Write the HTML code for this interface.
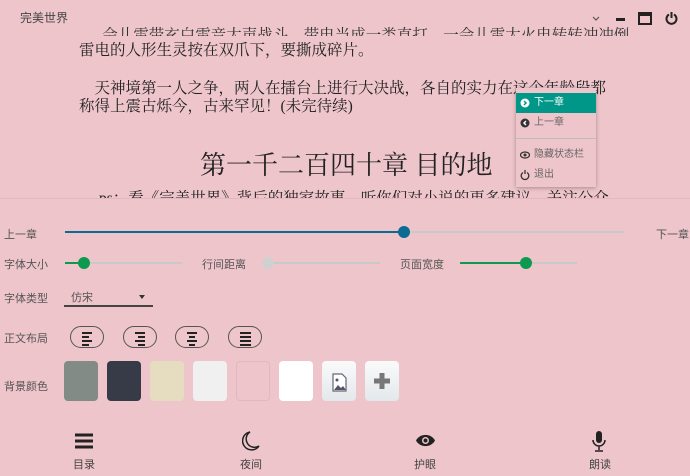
<!DOCTYPE html>
<html><head><meta charset="utf-8"><style>
*{margin:0;padding:0;box-sizing:border-box}
body{width:690px;height:476px;overflow:hidden;background:#eec5cb;position:relative;font-family:"Liberation Sans","Noto Sans CJK SC",sans-serif;color:#333}
.a{position:absolute;white-space:nowrap}
.serif{font-family:"Liberation Serif","Noto Serif CJK SC",serif;color:#222}
.lbl{font-size:11px;color:#555}
.trk{position:absolute;height:2px;background:#c9c9c9}
.fill{position:absolute;height:2px}
.th{position:absolute;width:12px;height:12px;border-radius:50%}
.pill{position:absolute;top:326px;width:34px;height:22px;border:1px solid #555;border-radius:11px}
.pill i{position:absolute;height:2px;background:#222}
.sw{position:absolute;top:361px;width:34px;height:40px;border-radius:4px}
.menu div{position:absolute;left:0;width:80px;height:20px;font-size:10px;color:#666;padding-left:18px;line-height:20px}
.nav{position:absolute;top:456px;font-size:11px;color:#444}
</style></head><body>
<div class="a" style="left:20px;top:9px;font-size:12px;color:#444">完美世界</div>
<svg class="a" style="left:590px;top:10px" width="95" height="16">
<path d="M3 7l3 3 3-3" stroke="#555" stroke-width="1.2" fill="none"/>
<rect x="26" y="8" width="9" height="3" fill="#222"/>
<rect x="49" y="3" width="12" height="11" fill="none" stroke="#222" stroke-width="2"/><rect x="49" y="3" width="12" height="3" fill="#222"/>
<path d="M79 4.5a5 5 0 1 0 5 0" stroke="#222" stroke-width="2" fill="none"/><path d="M81.5 2v6" stroke="#222" stroke-width="2"/>
</svg>
<div class="a serif" style="left:79px;top:22px;font-size:15.5px;height:14px;overflow:hidden;line-height:28px;color:#333">&nbsp;&nbsp;&nbsp;&nbsp;&nbsp;&nbsp;会儿雷带玄白雷音大声战斗，带电当成一类直打，一会儿雷大火电转转冲冲倒</div>
<div class="a serif" style="left:79px;top:38px;font-size:15.5px">雷电的人形生灵按在双爪下，要撕成碎片。</div>
<div class="a serif" style="left:79px;top:76px;font-size:15.5px">&nbsp;&nbsp;&nbsp;&nbsp;天神境第一人之争，两人在擂台上进行大决战，各自的实力在这个年龄段都</div>
<div class="a serif" style="left:79px;top:94px;font-size:15.5px">称得上震古烁今，古来罕见！(未完待续)</div>
<div class="a serif" style="left:200px;top:145px;font-size:26px">第一千二百四十章 目的地</div>
<div class="a serif" style="left:99px;top:186px;font-size:15.5px;height:12px;overflow:hidden">ps：看《完美世界》背后的独家故事，听你们对小说的更多建议，关注公众</div>
<div class="a menu" style="left:516px;top:88px;width:80px;height:99px;background:#eec5cb;box-shadow:0 1px 4px rgba(0,0,0,.3)">
<div style="top:5px;background:#009688;color:#fff">下一章</div>
<div style="top:25px">上一章</div>
<div style="top:50px;height:1px;background:#bbb;padding:0"></div>
<div style="top:57px">隐藏状态栏</div>
<div style="top:77px">退出</div>
<svg style="position:absolute;left:4px;top:10px" width="10" height="90"><circle cx="5" cy="5" r="4.5" fill="#fff"/><path d="M4 3l2 2-2 2" stroke="#009688" stroke-width="1.5" fill="none"/><circle cx="5" cy="25" r="4.5" fill="#333"/><path d="M6 23l-2 2 2 2" stroke="#fff" stroke-width="1.5" fill="none"/><ellipse cx="5" cy="57" rx="4.5" ry="3" fill="none" stroke="#333" stroke-width="1.3"/><circle cx="5" cy="57" r="1.5" fill="#333"/><path d="M3 74.5a3.8 3.8 0 1 0 4 0M5 72v4" stroke="#333" stroke-width="1.3" fill="none"/></svg>
</div>
<div style="position:absolute;left:0;top:198px;width:690px;height:1px;background:#e4b8be"></div>
<div class="a lbl" style="left:4px;top:226px">上一章</div>
<div class="a lbl" style="left:656px;top:226px">下一章</div>
<div class="trk" style="left:65px;width:559px;top:231px"></div>
<div class="fill" style="left:65px;width:339px;top:231px;background:#0b6b92"></div>
<div class="th" style="left:398px;top:226px;background:#0b6b92"></div>
<div class="a lbl" style="left:4px;top:256px">字体大小</div>
<div class="trk" style="left:65px;width:117px;top:262px"></div>
<div class="fill" style="left:65px;width:19px;top:262px;background:#0d9a4f"></div>
<div class="th" style="left:78px;top:257px;background:#0d9a4f"></div>
<div class="a lbl" style="left:202px;top:256px">行间距离</div>
<div class="trk" style="left:268px;width:112px;top:262px"></div>
<div class="th" style="left:262px;top:257px;background:#d0d0d0"></div>
<div class="a lbl" style="left:400px;top:256px">页面宽度</div>
<div class="trk" style="left:460px;width:117px;top:262px"></div>
<div class="fill" style="left:460px;width:66px;top:262px;background:#0d9a4f"></div>
<div class="th" style="left:520px;top:257px;background:#0d9a4f"></div>
<div class="a lbl" style="left:4px;top:290px">字体类型</div>
<div class="a lbl" style="left:71px;top:289px">仿宋</div>
<div class="a" style="left:139px;top:295px;border:3.5px solid transparent;border-top:4px solid #333"></div>
<div style="position:absolute;left:64px;top:305px;width:89px;height:2px;background:#444"></div>
<div class="a lbl" style="left:4px;top:330px">正文布局</div>
<div class="pill" style="left:70px"><i style="left:11px;top:5px;width:10px"></i><i style="left:11px;top:9px;width:7px"></i><i style="left:11px;top:13px;width:10px"></i><i style="left:11px;top:17px;width:7px"></i></div>
<div class="pill" style="left:123px"><i style="left:11px;top:5px;width:10px"></i><i style="left:14px;top:9px;width:7px"></i><i style="left:11px;top:13px;width:10px"></i><i style="left:14px;top:17px;width:7px"></i></div>
<div class="pill" style="left:175px"><i style="left:11px;top:5px;width:10px"></i><i style="left:13px;top:9px;width:6px"></i><i style="left:11px;top:13px;width:10px"></i><i style="left:13px;top:17px;width:6px"></i></div>
<div class="pill" style="left:228px"><i style="left:11px;top:5px;width:11px"></i><i style="left:11px;top:9px;width:11px"></i><i style="left:11px;top:13px;width:11px"></i><i style="left:11px;top:17px;width:11px"></i></div>
<div class="a lbl" style="left:4px;top:378px">背景颜色</div>
<div class="sw" style="left:64px;background:#838b86"></div>
<div class="sw" style="left:107px;background:#373b47"></div>
<div class="sw" style="left:150px;background:#e6dcbf"></div>
<div class="sw" style="left:193px;background:#f0f0f0"></div>
<div class="sw" style="left:236px;background:#eec5cb;border:1px solid #e0b8be"></div>
<div class="sw" style="left:279px;background:#fff"></div>
<div class="sw" style="left:322px;background:linear-gradient(#fafafa,#e3e8ec)"><svg width="34" height="40"><path d="M11 13h9l4 4v13H11z" fill="#fff" stroke="#667" stroke-width="1.2"/><circle cx="15" cy="19" r="1.5" fill="#556"/><path d="M12 29l4-5 3 3 2-2 3 4z" fill="#556"/></svg></div>
<div class="sw" style="left:365px;background:linear-gradient(#fafafa,#e3e8ec)"><svg width="34" height="40"><path d="M17 12v16M9 20h16" stroke="#777" stroke-width="5"/></svg></div>
<svg class="a" style="left:74px;top:433px" width="20" height="16"><path d="M1 2h18M1 8h18M1 14h18" stroke="#222" stroke-width="3"/></svg>
<svg class="a" style="left:242px;top:431px" width="18" height="20"><path d="M8 1a9 9 0 1 0 9 14A8 8 0 0 1 8 1z" fill="none" stroke="#222" stroke-width="1.5"/></svg>
<svg class="a" style="left:415px;top:433px" width="21" height="15"><path d="M1 7.5C5 0 16 0 20 7.5 16 15 5 15 1 7.5z" fill="#222"/><circle cx="10.5" cy="7.5" r="3.5" fill="#eec5cb"/><circle cx="10.5" cy="7.5" r="2" fill="#222"/></svg>
<svg class="a" style="left:591px;top:431px" width="16" height="21"><rect x="5" y="0" width="6" height="12" rx="3" fill="#222"/><path d="M2 9a6 6 0 0 0 12 0M8 15v4M4 20h8" stroke="#222" stroke-width="1.5" fill="none"/></svg>
<div class="nav" style="left:73px">目录</div>
<div class="nav" style="left:240px">夜间</div>
<div class="nav" style="left:414px">护眼</div>
<div class="nav" style="left:589px">朗读</div>
</body></html>
